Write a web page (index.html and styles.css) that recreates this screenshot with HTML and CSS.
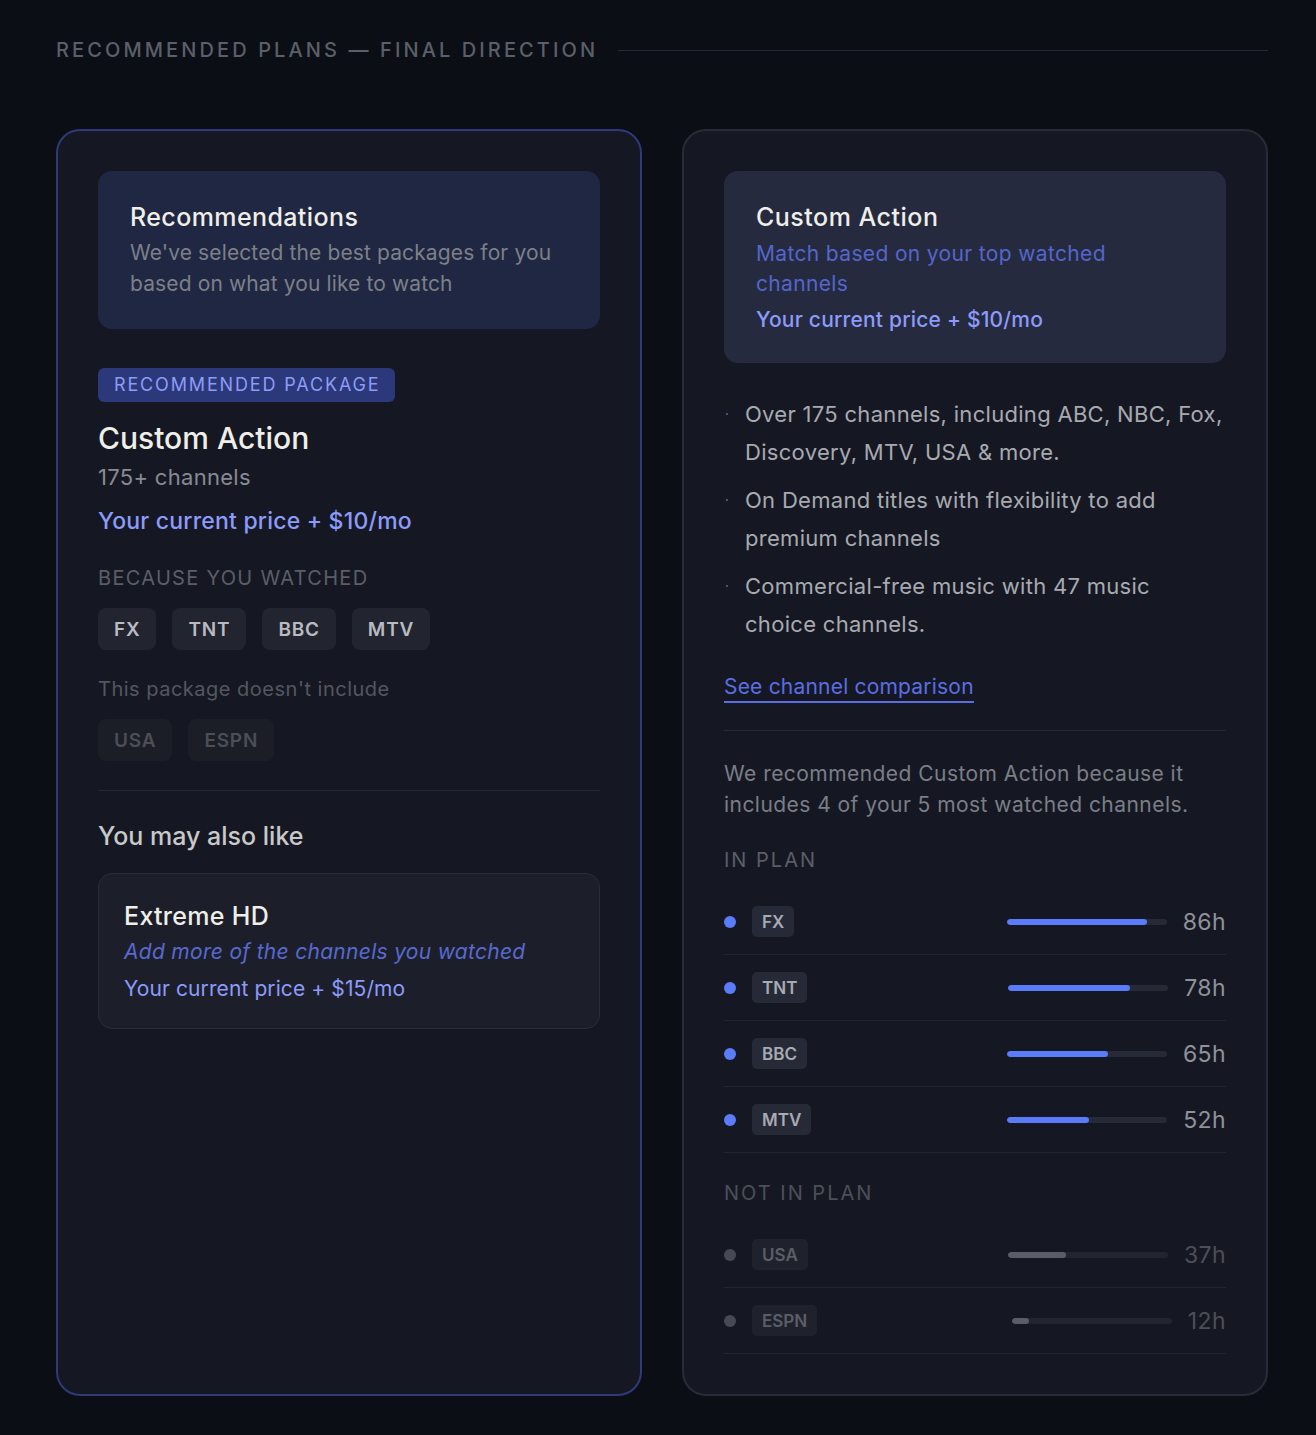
FILE: index.html
```html
<!DOCTYPE html>
<html lang="en">
<head>
<meta charset="utf-8">
<title>Recommended plans</title>
<link rel="stylesheet" href="styles.css">
</head>
<body>
<div class="page">
  <header class="page-head">
    <h1 class="page-title">RECOMMENDED PLANS — FINAL DIRECTION</h1>
    <div class="page-rule"></div>
  </header>

  <div class="cards">
    <section class="card card-primary">
      <div class="intro">
        <h2 class="intro-title">Recommendations</h2>
        <p class="intro-text">We've selected the best packages for you based on what you like to watch</p>
      </div>

      <div class="package">
        <span class="badge">RECOMMENDED PACKAGE</span>
        <h3 class="pkg-name">Custom Action</h3>
        <p class="pkg-count">175+ channels</p>
        <p class="pkg-price">Your current price + $10/mo</p>

        <p class="label">BECAUSE YOU WATCHED</p>
        <div class="chips">
          <span class="chip">FX</span>
          <span class="chip">TNT</span>
          <span class="chip">BBC</span>
          <span class="chip">MTV</span>
        </div>

        <p class="muted-label">This package doesn't include</p>
        <div class="chips">
          <span class="chip chip-off">USA</span>
          <span class="chip chip-off">ESPN</span>
        </div>
      </div>

      <div class="also">
        <h4 class="also-title">You may also like</h4>
        <div class="alt-card">
          <h5 class="alt-name">Extreme HD</h5>
          <p class="alt-desc">Add more of the channels you watched</p>
          <p class="alt-price">Your current price + $15/mo</p>
        </div>
      </div>
    </section>

    <section class="card card-secondary">
      <div class="summary">
        <h2 class="summary-title">Custom Action</h2>
        <p class="summary-desc">Match based on your top watched channels</p>
        <p class="summary-price">Your current price + $10/mo</p>
      </div>

      <ul class="features">
        <li>Over 175 channels, including ABC, NBC, Fox, Discovery, MTV, USA &amp; more.</li>
        <li>On Demand titles with flexibility to add premium channels</li>
        <li>Commercial-free music with 47 music choice channels.</li>
      </ul>

      <a class="compare-link" href="#">See channel comparison</a>

      <div class="why">
        <p class="why-text">We recommended Custom Action because it includes 4 of your 5 most watched channels.</p>

        <p class="group-label">IN PLAN</p>
        <ul class="usage">
          <li class="usage-row"><span class="dot"></span><span class="tag">FX</span><span class="bar"><span class="fill" style="width:87.5%"></span></span><span class="hours">86h</span></li>
          <li class="usage-row"><span class="dot"></span><span class="tag">TNT</span><span class="bar"><span class="fill" style="width:76%"></span></span><span class="hours">78h</span></li>
          <li class="usage-row"><span class="dot"></span><span class="tag">BBC</span><span class="bar"><span class="fill" style="width:63%"></span></span><span class="hours">65h</span></li>
          <li class="usage-row"><span class="dot"></span><span class="tag">MTV</span><span class="bar"><span class="fill" style="width:51%"></span></span><span class="hours">52h</span></li>
        </ul>

        <p class="group-label group-label-off">NOT IN PLAN</p>
        <ul class="usage usage-off">
          <li class="usage-row"><span class="dot"></span><span class="tag">USA</span><span class="bar"><span class="fill" style="width:36%"></span></span><span class="hours">37h</span></li>
          <li class="usage-row"><span class="dot"></span><span class="tag">ESPN</span><span class="bar"><span class="fill" style="width:11%"></span></span><span class="hours">12h</span></li>
        </ul>
      </div>
    </section>
  </div>
</div>
</body>
</html>
```

FILE: styles.css
```css
* { box-sizing: border-box; }

html, body {
  margin: 0;
  padding: 0;
  background: #0b0e14;
}

body {
  font-family: Inter, "Noto Sans", "Liberation Sans", sans-serif;
  color: #efeee8;
}

p, h1, h2, h3, h4, h5, ul { margin: 0; padding: 0; }
ul { list-style: none; }

.page {
  padding: 36px 48px 38px 56px;
}

.page-head {
  display: flex;
  align-items: center;
  gap: 20px;
  height: 28px;
}

.page-title {
  font-size: 20px;
  font-weight: 500;
  letter-spacing: 3.1px;
  color: #5b5f69;
  white-space: nowrap;
  line-height: 28px;
}

.page-rule {
  flex: 1;
  height: 1px;
  background: #262934;
}

.cards {
  margin-top: 65px;
  display: grid;
  grid-template-columns: 1fr 1fr;
  gap: 40px;
}

.card {
  border-radius: 24px;
  background: #151823;
  padding: 40px;
  border: 2px solid #292c38;
  min-height: 1267px;
}

.card-primary {
  border-color: #2e3a79;
}

/* Intro box */
.intro {
  background: #1f2742;
  border-radius: 14px;
  padding: 32px 32px 30px;
}

.intro-title {
  font-size: 25px;
  font-weight: 500;
  line-height: 28px;
  letter-spacing: 0.4px;
  color: #efeee8;
}

.intro-text {
  margin-top: 6px;
  font-size: 21px;
  line-height: 31px;
  letter-spacing: 0.12px;
  color: #7d8088;
}

/* Package */
.package {
  padding-top: 39px;
  padding-bottom: 29px;
  border-bottom: 1px solid #272a35;
}

.badge {
  display: inline-block;
  background: #2b387a;
  color: #8e9cf6;
  font-size: 18px;
  letter-spacing: 1.85px;
  line-height: 34px;
  height: 34px;
  padding: 0 14px 0 16px;
  border-radius: 6px;
}

.pkg-name {
  margin-top: 16px;
  font-size: 30px;
  font-weight: 500;
  line-height: 40px;
  color: #efeee8;
}

.pkg-count {
  margin-top: 2px;
  font-size: 22px;
  line-height: 34px;
  letter-spacing: 0.3px;
  color: #888b93;
}

.pkg-price {
  margin-top: 10px;
  font-size: 23px;
  font-weight: 500;
  line-height: 34px;
  letter-spacing: 0.2px;
  color: #8c9bfa;
}

.label {
  margin-top: 26px;
  font-size: 20px;
  letter-spacing: 1.3px;
  color: #5b5e67;
  line-height: 28px;
}

.chips {
  display: flex;
  gap: 16px;
  margin-top: 16px;
}

.chip {
  display: inline-flex;
  align-items: center;
  height: 42px;
  padding: 0 16px;
  border-radius: 8px;
  background: #22252f;
  color: #b9bbc1;
  font-size: 19px;
  font-weight: 600;
  letter-spacing: 0.8px;
}

.chip-off {
  background: #1b1e27;
  color: #4b4e56;
}

.muted-label {
  margin-top: 25px;
  font-size: 20px;
  line-height: 28px;
  letter-spacing: 0.5px;
  color: #54575f;
}

/* Also like */
.also {
  padding-top: 29px;
}

.also-title {
  font-size: 25px;
  font-weight: 500;
  line-height: 32px;
  color: #c9c9c9;
}

.alt-card {
  margin-top: 21px;
  background: #1c1f2a;
  border: 1px solid #2a2d38;
  border-radius: 14px;
  padding: 26px 25px 23px;
}

.alt-name {
  font-size: 25px;
  font-weight: 500;
  line-height: 32px;
  letter-spacing: 0.3px;
  color: #efeee8;
}

.alt-desc {
  margin-top: 4px;
  font-size: 21px;
  font-style: italic;
  line-height: 32px;
  letter-spacing: 0.3px;
  color: #5869d0;
}

.alt-price {
  margin-top: 5px;
  font-size: 21px;
  line-height: 32px;
  letter-spacing: 0.1px;
  color: #8c9bfa;
}

/* Right card */
.summary {
  background: #252a3f;
  border-radius: 14px;
  padding: 32px 32px 28px;
}

.summary-title {
  font-size: 25px;
  font-weight: 500;
  line-height: 28px;
  letter-spacing: 0.5px;
  color: #efeee8;
}

.summary-desc {
  margin-top: 8px;
  max-width: 400px;
  font-size: 21px;
  line-height: 30px;
  letter-spacing: 0.35px;
  color: #5466cb;
}

.summary-price {
  margin-top: 6px;
  font-size: 21px;
  font-weight: 500;
  line-height: 30px;
  letter-spacing: 0.2px;
  color: #8c9bfa;
}

.features {
  margin-top: 32px;
  padding-right: 2px;
  display: flex;
  flex-direction: column;
  gap: 10px;
}

.features li {
  position: relative;
  padding-left: 21px;
  font-size: 22px;
  line-height: 38px;
  letter-spacing: 0.3px;
  color: #a8aab0;
}

.features li::before {
  content: "";
  position: absolute;
  left: 2px;
  top: 18px;
  width: 2px;
  height: 2px;
  background: #4a5080;
}

.compare-link {
  display: inline-block;
  margin-top: 30px;
  font-size: 21px;
  line-height: 28px;
  letter-spacing: 0.2px;
  color: #5a6ee2;
  text-decoration: none;
  border-bottom: 2px solid #5a6ee2;
}

.why {
  margin-top: 27px;
  border-top: 1px solid #272a35;
  padding-top: 27px;
}

.why-text {
  font-size: 21px;
  line-height: 31px;
  letter-spacing: 0.45px;
  color: #7b7e86;
}

.group-label {
  margin-top: 26px;
  font-size: 20px;
  line-height: 28px;
  letter-spacing: 2px;
  color: #5b5e67;
}

.group-label-off {
  margin-top: 26px;
  color: #4c4f58;
}

.usage {
  margin-top: 15px;
}

.usage-row {
  display: flex;
  align-items: center;
  height: 66px;
  border-bottom: 1px solid #22252f;
}

.dot {
  width: 12px;
  height: 12px;
  border-radius: 50%;
  background: #5b7cf8;
  flex: none;
}

.tag {
  margin-left: 16px;
  display: inline-flex;
  align-items: center;
  height: 31px;
  padding: 0 10px;
  border-radius: 5px;
  background: #262a37;
  color: #a8abb2;
  font-size: 17px;
  font-weight: 600;
}

.bar {
  margin-left: auto;
  width: 160px;
  height: 6px;
  border-radius: 3px;
  background: #262a37;
  overflow: hidden;
  flex: none;
}

.fill {
  display: block;
  height: 100%;
  border-radius: 3px;
  background: #5b7cfa;
}

.hours {
  margin-left: 16px;
  font-size: 23px;
  color: #8f9299;
  line-height: 30px;
  letter-spacing: 0.4px;
}

.usage-off .dot { background: #474a54; }
.usage-off .tag { background: #1f222c; color: #5b5e67; }
.usage-off .bar { background: #22252f; }
.usage-off .fill { background: #5a5d66; }
.usage-off .hours { color: #4c4f57; }
```
